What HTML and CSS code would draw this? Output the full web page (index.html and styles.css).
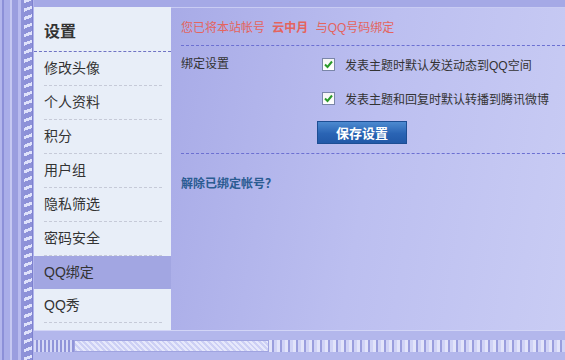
FILE: index.html
```html
<!DOCTYPE html>
<html lang="zh">
<head>
<meta charset="utf-8">
<link rel="stylesheet" href="styles.css">
</head>
<body>
<div class="page">
  <div class="frame-left"><div class="rope"></div></div>
  <div class="main">
    <div class="panel">
      <aside class="sidebar">
        <h2 class="side-title">设置</h2>
        <ul class="menu">
          <li class="item">修改头像</li>
          <li class="item">个人资料</li>
          <li class="item">积分</li>
          <li class="item">用户组</li>
          <li class="item">隐私筛选</li>
          <li class="item">密码安全</li>
          <li class="item active">QQ绑定</li>
          <li class="item last">QQ秀</li>
        </ul>
      </aside>
      <section class="content">
        <p class="notice">您已将本站帐号 <b>云中月</b> 与QQ号码绑定</p>
        <div class="settings">
          <div class="label">绑定设置</div>
          <div class="options">
            <label class="opt"><span class="check"><svg width="9" height="9" viewBox="0 0 9 9"><path d="M1 4.5 L3.5 7 L8 1.5" fill="none" stroke="#2a9a2a" stroke-width="2"/></svg></span>发表主题时默认发送动态到QQ空间</label>
            <label class="opt"><span class="check"><svg width="9" height="9" viewBox="0 0 9 9"><path d="M1 4.5 L3.5 7 L8 1.5" fill="none" stroke="#2a9a2a" stroke-width="2"/></svg></span>发表主题和回复时默认转播到腾讯微博</label>
            <button class="save">保存设置</button>
          </div>
        </div>
        <a class="unbind">解除已绑定帐号？</a>
      </section>
    </div>
    <div class="bottom">
      <div class="band"><div class="band-l"></div><div class="band-m"></div><div class="band-r"></div></div>
    </div>
  </div>
</div>
</body>
</html>
```
FILE: styles.css
```css
* { box-sizing: border-box; }
html, body { margin: 0; padding: 0; }
body {
  width: 565px; height: 360px; overflow: hidden;
  background: #a5a9e6;
  font-family: "Liberation Sans", "Noto Sans CJK SC", sans-serif;
  font-size: 12px; color: #333;
}
.page { display: flex; height: 360px; }
.frame-left {
  width: 34px; flex: none; position: relative;
  background: linear-gradient(to right,
    #b3b6ec 0, #b3b6ec 2px, #8c90d8 2px, #8c90d8 4px,
    #a9ade8 4px, #a9ade8 10px, #c6c9f2 10px, #c6c9f2 12px,
    #9a9edf 12px, #9a9edf 18px, #b8bbef 18px, #b8bbef 21px,
    #8f93d9 21px, #8f93d9 24px, #b0b4ec 24px, #b0b4ec 34px);
}
.rope {
  position: absolute; left: 24px; top: 0; width: 9px; height: 100%;
  background: repeating-linear-gradient(160deg, #dfe2fb 0, #dfe2fb 3px, #8d91d8 3px, #8d91d8 8px);
  border-right: 1px solid #7e82cf;
}
.main { flex: 1; display: flex; flex-direction: column; }
.panel { display: flex; margin-top: 7px; height: 323px; border-top: 1px solid #c9ccf3; }
.sidebar {
  width: 137px; flex: none; background: #e8eef8;
  margin-top: -1px;
}
.side-title {
  margin: 0; height: 45px; padding: 11px 0 0 10px;
  font-size: 16px; font-weight: bold; color: #333;
  border-bottom: 1px dashed #6f73c4;
}
.menu { list-style: none; margin: 0; padding: 0 9px 0 10px; }
.item {
  height: 34px; line-height: 33px; font-size: 14px; color: #333;
  border-bottom: 1px dashed #c6cad8;
}
.item:first-child { height: 34px; line-height: 32px; }
.item.active {
  margin: 0 -9px 0 -10px; padding-left: 10px;
  background: #a2a6e2; border-bottom: none; height: 33px;
}
.item.last { margin-top: 0; height: 34px; line-height: 32px; }
.content {
  flex: 1; padding: 0 0 0 10px;
  background: linear-gradient(100deg, #a8abe7 0%, #bcbff0 50%, #c9ccf4 100%);
}
.notice {
  margin: 0; height: 38px; padding-top: 10px;
  color: #e4645e; font-size: 12px;
  border-bottom: 1px dashed #6c70d2;
}
.notice b { font-weight: bold; margin: 0 4px; }
.settings { display: flex; padding-top: 9px; height: 108px; border-bottom: 1px dashed #6c70d2; }
.label { width: 141px; flex: none; padding-left: 0; line-height: 18px; }
.options { display: flex; flex-direction: column; align-items: flex-start; }
.opt { display: flex; align-items: center; height: 18px; margin-bottom: 17px; white-space: nowrap; }
.opt + .opt { margin-top: -1px; }
.check {
  width: 13px; height: 13px; margin-right: 10px;
  border: 1px solid #7a86a8; background: linear-gradient(#f4f4f4, #ffffff);
  display: flex; align-items: center; justify-content: center;
}
.save {
  margin: -3px 0 0 -5px; width: 90px; height: 23px;
  border: 1px solid #1d4e94; border-radius: 0;
  background: linear-gradient(#4d8ad0, #2a64b4 55%, #2259a8);
  color: #fff; font-weight: bold; font-size: 13px;
  font-family: "Liberation Sans", "Noto Sans CJK SC", sans-serif;
  padding: 0;
}
.unbind {
  display: block; margin-top: 20px;
  font-weight: bold; color: #2b5c92; font-size: 12px;
}
.bottom {
  flex: 1; background: #b3b7ec; border-top: 1px solid #d2d5f6;
  padding-top: 9px;
}
.band { display: flex; height: 12px; }
.band-l { width: 40px; background: repeating-linear-gradient(to right, #d6d9f7 0, #d6d9f7 2px, #9094d9 2px, #9094d9 4px); }
.band-m { width: 195px; background: repeating-linear-gradient(45deg, #cdd0f5 0, #cdd0f5 2px, #e6e8fb 2px, #e6e8fb 4px); border: 1px solid #a0a4e0; }
.band-r { flex: 1; background: repeating-linear-gradient(to right, #e2e4fa 0, #e2e4fa 3px, #9a9edd 3px, #9a9edd 5px, #d0d3f6 5px, #d0d3f6 8px); }
```
